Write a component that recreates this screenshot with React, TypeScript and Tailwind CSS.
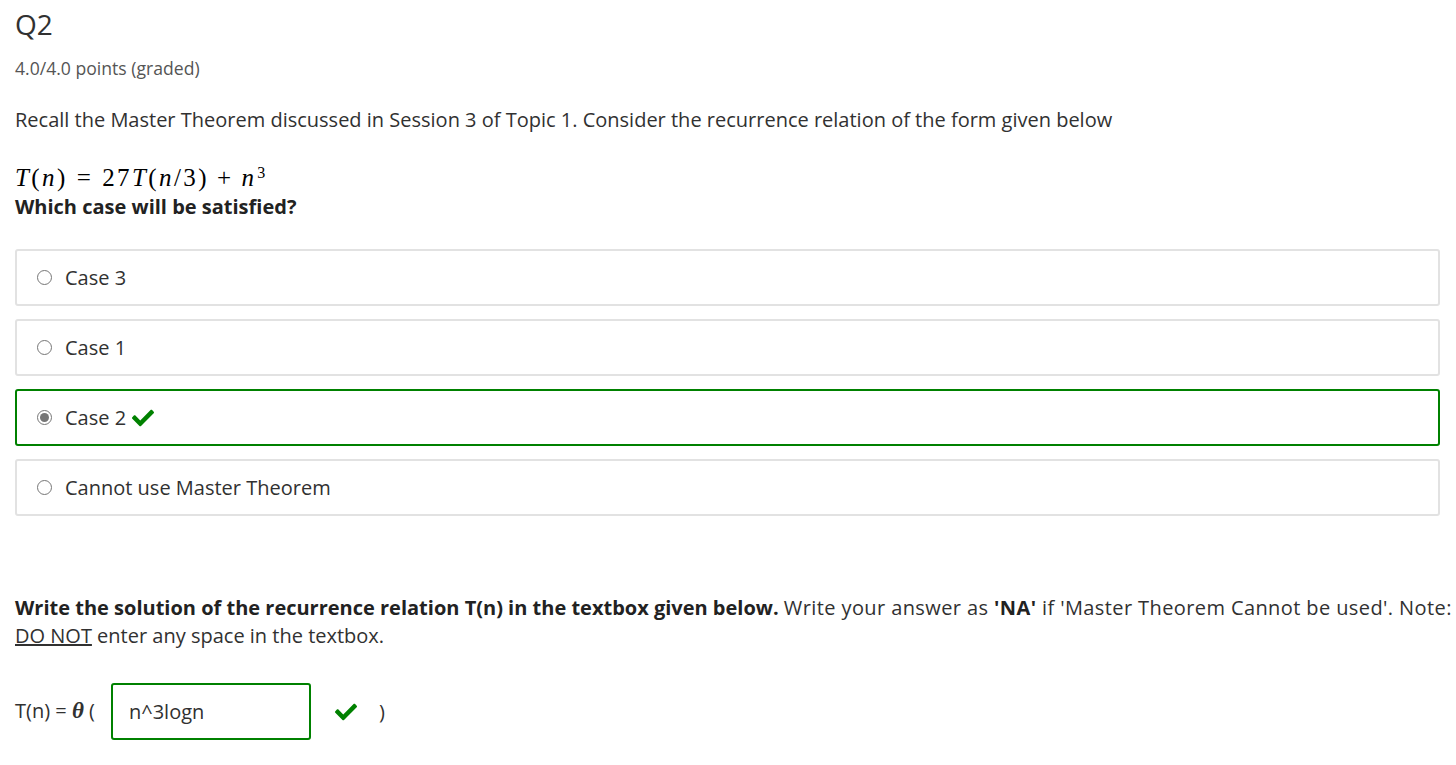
const Check = ({ className = "" }: { className?: string }) => (
  <svg viewBox="0 0 512 512" className={className} fill="#008100">
    <path d="M173.9 439.4l-166.4-166.4c-10-10-10-26.2 0-36.2l36.2-36.2c10-10 26.2-10 36.2 0L192 312.7 432.1 72.6c10-10 26.2-10 36.2 0l36.2 36.2c10 10 10 26.2 0 36.2l-294.4 294.4c-10 10-26.2 10-36.2 0z" />
  </svg>
);

const options = [
  { label: "Case 3", selected: false },
  { label: "Case 1", selected: false },
  { label: "Case 2", selected: true },
  { label: "Cannot use Master Theorem", selected: false },
];

function Radio({ selected }: { selected: boolean }) {
  return (
    <span className="w-[15px] h-[15px] rounded-full border border-[#767676] flex items-center justify-center shrink-0 bg-white">
      {selected && <span className="w-[9px] h-[9px] rounded-full bg-[#767676]" />}
    </span>
  );
}

export default function App() {
  return (
    <div className="min-h-[765px] bg-white text-[#313131] font-['Open_Sans',sans-serif] pl-[15px] pr-[16px]">
      <h2 className="text-[28px] leading-[48px] font-normal">Q2</h2>
      <p className="text-[17.6px] text-[#555] mt-[7px] leading-[26px]">4.0/4.0 points (graded)</p>

      <p className="text-[20px] leading-[30px] mt-[24px]">
        Recall the Master Theorem discussed in Session 3 of Topic 1. Consider the recurrence relation of the form given below
      </p>

      <div className="mt-[28px] text-[25px] leading-[30px] tracking-[2.4px] font-['Liberation_Serif',serif] text-black">
        <i>T</i>(<i>n</i>)<span className="mx-[9px]">=</span>27<i>T</i>(<i>n</i>/3)<span className="mx-[8px]">+</span><i>n</i>
        <sup className="text-[16px] ml-[1px]">3</sup>
      </div>
      <p className="text-[20px] leading-[28px] font-bold text-[#222]">Which case will be satisfied?</p>

      <div className="mt-[28px] flex flex-col gap-[13px]">
        {options.map((o) => (
          <div
            key={o.label}
            className={`h-[57px] rounded-[3px] border-2 flex items-center gap-[13px] pl-[20px] ${
              o.selected ? "border-[#008100]" : "border-[#e2e2e2]"
            }`}
          >
            <Radio selected={o.selected} />
            <span className="text-[20px] flex items-center gap-[6px]">
              {o.label}
              {o.selected && <Check className="w-[22px] h-[22px]" />}
            </span>
          </div>
        ))}
      </div>

      <p className="text-[20px] leading-[28px] mt-[78px] -mr-[16px] whitespace-nowrap">
        <b className="text-[#222]">Write the solution of the recurrence relation T(n) in the textbox given below.</b>{" "}
        <span className="tracking-[0.4px]">
          Write your answer as <b className="text-[#222]">'NA'</b> if 'Master Theorem Cannot be used'. Note:
        </span>
        <br />
        <u>DO NOT</u> enter any space in the textbox.
      </p>

      <div className="mt-[33px] flex items-center text-[20px]">
        <span>
          T(n) = <i className="font-['Liberation_Serif',serif] font-bold text-[23px]">θ</i> (
        </span>
        <div className="ml-[16px] w-[200px] h-[57px] rounded-[3px] border-2 border-[#008100] flex items-center pl-[16px]">
          n^3logn
        </div>
        <Check className="ml-[24px] w-[22px] h-[22px]" />
        <span className="ml-[22px]">)</span>
      </div>
    </div>
  );
}
